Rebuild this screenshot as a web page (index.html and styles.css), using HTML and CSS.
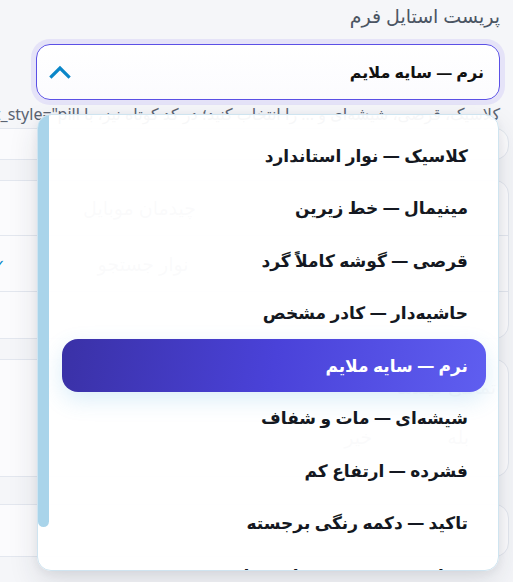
FILE: index.html
```html
<!DOCTYPE html>
<html lang="fa" dir="rtl">
<head>
<meta charset="utf-8">
<title>پریست استایل فرم</title>
<link rel="stylesheet" href="styles.css">
</head>
<body>
<div class="field">
  <label class="field-label">پریست استایل فرم</label>
  <div class="select">
    <span class="select-value">نرم — سایه ملایم</span>
    <svg class="chevron" width="22" height="14" viewBox="0 0 22 14"><polyline points="2.5,11.5 11,3 19.5,11.5" fill="none" stroke="#0a86c8" stroke-width="3.2" stroke-linecap="square"/></svg>
  </div>
  <p class="hint">کلاسیک، قرصی، شیشه‌ای و ... را انتخاب کنید؛ در کد کوتاه نیز، با preset_style="pill"</p>

  <div class="dropdown">
    <ul class="options">
      <li class="option">کلاسیک — نوار استاندارد</li>
      <li class="option">مینیمال — خط زیرین</li>
      <li class="option">قرصی — گوشه کاملاً گرد</li>
      <li class="option">حاشیه‌دار — کادر مشخص</li>
      <li class="option selected">نرم — سایه ملایم</li>
      <li class="option">شیشه‌ای — مات و شفاف</li>
      <li class="option">فشرده — ارتفاع کم</li>
      <li class="option">تاکید — دکمه رنگی برجسته</li>
      <li class="option">شناور — برچسب شناور فیلد</li>
    </ul>
    <div class="scrollbar"><div class="scroll-thumb"></div></div>
  </div>
</div>

<div class="bg">
  <div class="card card-a"></div>
  <div class="card card-b">
    <div class="row row-1"><span class="faint">چیدمان موبایل</span></div>
    <div class="row row-2"><span class="faint">نوار جستجو</span><span class="tick">✓</span></div>
    <div class="row row-3"></div>
  </div>
  <div class="card card-c">
    <div class="row row-4"><span class="faint">تمامی فیلدها</span></div>
    <div class="row row-5"><span class="faint">بله</span><span class="faint">خیر</span></div>
  </div>
  <div class="card card-d"></div>
</div>
</body>
</html>
```

FILE: styles.css
```css
html, body {
  margin: 0;
  padding: 0;
}
body {
  background: #f5f6f9;
  font-family: "Noto Sans", "DejaVu Sans", sans-serif;
  color: #111827;
  overflow: hidden;
  width: 513px;
  height: 582px;
}
.field {
  position: relative;
  padding: 2px 13px 0 36px;
  z-index: 2;
}
.field-label {
  display: block;
  font-size: 19px;
  line-height: 28px;
  color: #4b5563;
}
.select {
  margin-top: 14px;
  height: 54px;
  border: 1px solid #5b50e6;
  border-radius: 14px;
  background: linear-gradient(#ffffff, #fbfbfe);
  box-shadow: 0 0 0 5px #e5e3f8;
  display: flex;
  align-items: center;
  justify-content: space-between;
  padding: 0 15px 0 12px;
}
.select-value {
  font-size: 16px;
  font-weight: 700;
  color: #111;
}
.chevron {
  display: block;
}
.hint {
  margin: 3px -13px 0 0;
  padding-right: 13px;
  font-size: 16px;
  line-height: 22px;
  color: #5b6472;
  white-space: nowrap;
}
.dropdown {
  position: absolute;
  top: 114px;
  left: 37px;
  width: 462px;
  height: 457px;
  box-sizing: border-box;
  border: 1px solid #cfe4f0;
  border-radius: 14px;
  background: rgba(255, 255, 255, 0.95);
  box-shadow: 0 12px 30px rgba(30, 41, 59, 0.12), 0 2px 8px rgba(30, 41, 59, 0.06);
  overflow: hidden;
  display: flex;
}
.options {
  flex: 1;
  list-style: none;
  margin: 0;
  overflow: hidden;
  padding: 14px 12px 14px 13px;
}
.scrollbar {
  width: 11px;
  flex: none;
}
.scroll-thumb {
  height: 412px;
  background: #a9d4ea;
  border-radius: 0 0 6px 6px;
}
.option {
  height: 52.5px;
  display: flex;
  align-items: center;
  padding: 0 18px;
  font-size: 17px;
  font-weight: 700;
  color: #141821;
  border-radius: 16px;
  box-sizing: border-box;
}
.option.selected {
  color: #fff;
  background: linear-gradient(100deg, #3a31a6 0%, #4a42d9 50%, #5f5ef0 100%);
  box-shadow: 0 8px 22px rgba(56, 160, 220, 0.18);
}

/* background content under the overlay */
.bg {
  position: relative;
  z-index: 1;
  margin: 3px 4px 0 -30px;
  display: flex;
  flex-direction: column;
  gap: 20px;
}
.card {
  background: #fbfbfd;
  border: 1px solid #e3e7ef;
  border-radius: 14px;
}
.card-a {
  height: 30px;
}
.card-b,
.card-c {
  display: flex;
  flex-direction: column;
}
.row {
  border-bottom: 1px solid #e3e7ef;
  display: flex;
  align-items: center;
  justify-content: flex-end;
  padding-left: 112px;
}
.row:last-child {
  border-bottom: 0;
}
.row-1 { height: 54px; }
.row-2 { height: 55px; padding-left: 22px; gap: 92px; }
.row-3 { height: 46px; }
.row-4 {
  height: 52px;
  border-bottom: 0;
  justify-content: flex-start;
  padding-right: 12px;
  align-items: flex-start;
  padding-top: 14px;
  box-sizing: border-box;
}
.row-5 {
  height: 64px;
  box-sizing: border-box;
  justify-content: flex-start;
  padding: 12px 39px 0 0;
  gap: 75px;
  align-items: flex-start;
}
.card-d {
  height: 51px;
  margin-top: 7px;
}
.faint {
  font-size: 19px;
  color: #9aa1ae;
}
.tick {
  color: #0a86c8;
  font-weight: 700;
  font-size: 15px;
}
```
